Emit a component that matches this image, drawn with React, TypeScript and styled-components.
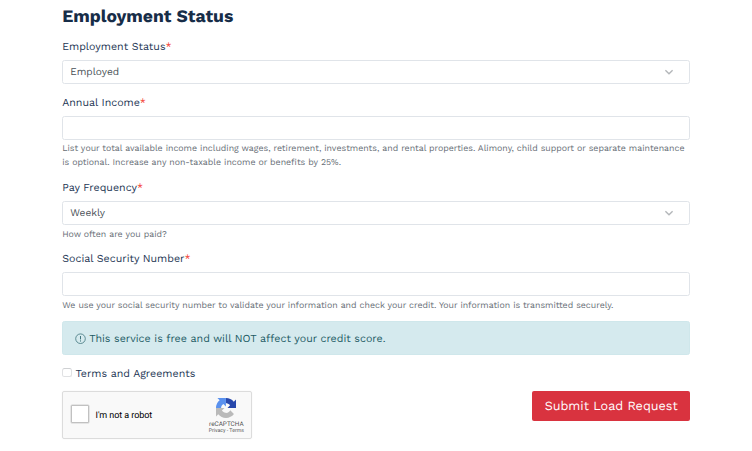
import React from "react";
import styled, { createGlobalStyle } from "styled-components";

const Global = createGlobalStyle`
  *, *::before, *::after { box-sizing: border-box; }
  body {
    margin: 0;
    background: #fff;
    overflow: hidden;
    font-family: "Work Sans", Inter, "Open Sans", sans-serif;
    text-rendering: geometricPrecision;
  }
`;

const Form = styled.form`
  width: 628px;
  height: 451px;
  margin-left: 62.2px;
  display: flex;
  flex-direction: column;
`;

const Title = styled.h2`
  margin: 6px 0 10.4px;
  height: 22px;
  font-size: 17.55px;
  line-height: 22px;
  font-weight: 700;
  color: #172d48;
  white-space: nowrap;
`;

const Field = styled.div<{ $height: number }>`
  height: ${(p) => p.$height}px;
  flex: none;
`;

const Label = styled.label`
  display: block;
  height: 22px;
  line-height: 18.6px;
  font-size: 10.67px;
  color: #1c3553;
  white-space: nowrap;
`;

const Required = styled.span`
  color: #f3392f;
`;

const Control = styled.div`
  height: 24px;
  display: flex;
  align-items: center;
  justify-content: space-between;
  padding: 0 15px 0 7px;
  border: 1px solid #e0e4e9;
  border-radius: 2.5px;
  background: #fff;
  color: #484f56;
  font-size: 10.15px;
`;

const Value = styled.span`
  padding-top: 1.2px;
`;

const Help = styled.div`
  margin-top: 3.6px;
  height: 13.5px;
  line-height: 13.5px;
  font-size: 8.79px;
  color: #666d75;
  white-space: nowrap;
  & + & { margin-top: 0; }
`;

const Alert = styled.div`
  flex: none;
  height: 34px;
  display: flex;
  align-items: center;
  gap: 3px;
  padding-left: 12px;
  border: 1px solid #cfe7eb;
  border-radius: 2.5px;
  background: #d5eaee;
  color: #215a64;
  font-size: 10.67px;
`;

const Terms = styled.label`
  flex: none;
  height: 18px;
  margin-top: 9px;
  display: flex;
  align-items: center;
  gap: 3.8px;
  font-size: 10.67px;
  color: #1c3553;
`;

const Tick = styled.span`
  width: 9.5px;
  height: 9.5px;
  margin-top: -2px;
  border: 1px solid #e0e1e3;
  border-top-color: #cfd1d3;
  border-radius: 2.5px;
`;

const Footer = styled.div`
  flex: none;
  margin-top: 8.2px;
  display: flex;
  justify-content: space-between;
  align-items: flex-start;
`;

const Captcha = styled.div`
  width: 190px;
  height: 48px;
  display: flex;
  align-items: center;
  padding: 0 6.4px 0 8px;
  border: 1px solid #dcdcdc;
  border-radius: 2px;
  background: #f9f9f9;
  box-shadow: 0 0 2px #0000000d;
  font-family: Roboto, sans-serif;
`;

const CaptchaBox = styled.span`
  width: 18px;
  height: 18px;
  margin-top: -1px;
  border: 1.5px solid #c1c1c1;
  border-radius: 1px;
  background: #fff;
  box-shadow: 0 0 0 0.5px #d2d2d2;
`;

const CaptchaText = styled.span`
  flex: 1;
  margin: 2px 0 0 6.4px;
  font-size: 9px;
  letter-spacing: -0.08px;
  color: #000;
`;

const Brand = styled.div`
  width: 37px;
  display: flex;
  flex-direction: column;
  align-items: center;
  padding-top: 4px;
  white-space: nowrap;
`;

const BrandName = styled.span`
  margin-top: 2px;
  font-size: 6.4px;
  line-height: 8px;
  color: #555;
`;

const BrandLinks = styled.span`
  font-size: 5.2px;
  line-height: 7px;
  color: #555;
`;

const Submit = styled.button`
  width: 158px;
  height: 30px;
  padding: 2.6px 0 0;
  border: 0;
  border-radius: 2px;
  background: #d9333f;
  color: #fff;
  font-family: inherit;
  font-size: 12.6px;
  text-rendering: geometricPrecision;
  white-space: nowrap;
`;

const Chevron = () => (
  <svg width="10" height="8" viewBox="0 0 10 8" fill="none">
    <path d="M1.4 2.2 5 5.8 8.6 2.2" stroke="#b4b7ba" strokeWidth="1.4" />
  </svg>
);

const InfoMark = () => (
  <svg width="11" height="11" viewBox="0 0 11 11" fill="none" stroke="#3f737c">
    <circle cx="5.5" cy="5.7" r="4.8" strokeWidth="0.8" />
    <path d="M5.5 3v3.4M5.5 7.4v1.1" strokeWidth="1" />
  </svg>
);

const RecaptchaLogo = () => (
  <svg width="20" height="20" viewBox="0 0 64 64">
    <path fill="#bababa" d="M0 31.96v27.36l7.2-7.18A31.9 31.9 0 0 0 31.97 63.9c10.4 0 19.63-4.95 25.47-12.62L45.66 39.41a15.6 15.6 0 0 1-4.77 5.34c-2.06 1.6-4.97 2.91-9 2.91-.49 0-.86-.06-1.14-.16-5-.39-9.32-3.14-11.87-7.12l8.34-8.42H0" />
    <path fill="#5a91ee" d="M31.86.06H4.5l7.18 7.18A31.9 31.9 0 0 0 0 31.94h16.24c0-.49.06-.86.16-1.14.39-5 3.14-9.32 7.12-11.87l8.32 8.34L31.86.06" />
    <path fill="#2848ac" d="M64 31.96V4.6l-7.2 7.18A31.9 31.9 0 0 0 32.03.06v16.2c.49 0 .86.06 1.14.16 5 .39 9.32 3.14 11.87 7.12l-8.34 8.42H64" />
  </svg>
);

export default function App() {
  return (
    <>
      <Global />
      <Form>
        <Title>Employment Status</Title>
        <Field $height={55.2}>
          <Label>Employment Status<Required>*</Required></Label>
          <Control><Value>Employed</Value><Chevron /></Control>
        </Field>
        <Field $height={85.4}>
          <Label>Annual Income<Required>*</Required></Label>
          <Control />
          <Help>List your total available income including wages, retirement, investments, and rental properties. Alimony, child support or separate maintenance</Help>
          <Help>is optional. Increase any non-taxable income or benefits by 25%.</Help>
        </Field>
        <Field $height={71.4}>
          <Label>Pay Frequency<Required>*</Required></Label>
          <Control><Value>Weekly</Value><Chevron /></Control>
          <Help>How often are you paid?</Help>
        </Field>
        <Field $height={71}>
          <Label>Social Security Number<Required>*</Required></Label>
          <Control />
          <Help>We use your social security number to validate your information and check your credit. Your information is transmitted securely.</Help>
        </Field>
        <Alert><InfoMark />This service is free and will NOT affect your credit score.</Alert>
        <Terms><Tick />Terms and Agreements</Terms>
        <Footer>
          <Captcha>
            <CaptchaBox />
            <CaptchaText>I'm not a robot</CaptchaText>
            <Brand>
              <RecaptchaLogo />
              <BrandName>reCAPTCHA</BrandName>
              <BrandLinks>Privacy - Terms</BrandLinks>
            </Brand>
          </Captcha>
          <Submit type="button">Submit Load Request</Submit>
        </Footer>
      </Form>
    </>
  );
}
